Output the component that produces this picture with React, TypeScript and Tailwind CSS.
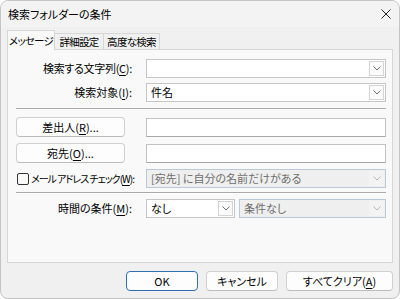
import React from 'react';

const font = "[font-family:'Noto_Sans_CJK_JP','Noto_Sans',sans-serif] [font-feature-settings:'palt']";

const Chevron = ({ color }: { color: string }) => (
  <svg width="8" height="5" viewBox="0 0 8 5" fill="none">
    <path d="M0.5 0.5 L4 4 L7.5 0.5" stroke={color} strokeWidth="1" />
  </svg>
);

const Combo = ({ value, disabled, className }: { value?: string; disabled?: boolean; className?: string }) => (
  <div
    className={`flex h-[19px] items-center border ${
      disabled ? 'border-[#b9c9da] bg-[#efefef] text-[#6e6e6e]' : 'border-[#c6c6c6] bg-white text-black'
    } ${className ?? ''}`}
  >
    <span className="min-w-0 flex-1 whitespace-nowrap pl-[4px] leading-[17px]">{value}</span>
    <span
      className={`mr-px flex h-[15px] w-[15px] shrink-0 items-center justify-center border ${
        disabled ? 'border-transparent bg-[#f3f3f3]' : 'border-[#d4d4d4] bg-[#fbfbfb]'
      }`}
    >
      <Chevron color={disabled ? '#b8b8b8' : '#707070'} />
    </span>
  </div>
);

const TextBox = () => <div className="h-[19px] border border-[#c2c2c2] border-b-[#a8a8a8] bg-white" />;

const Button = ({ children, primary, className }: { children: React.ReactNode; primary?: boolean; className?: string }) => (
  <div
    className={`flex h-[20px] items-center justify-center whitespace-nowrap rounded-[4px] border bg-[#fdfdfd] text-black leading-none ${
      primary ? 'border-[#2f6fb0]' : 'border-[#d0d0d0] border-b-[#bcbcbc]'
    } ${className ?? ''}`}
  >
    {children}
  </div>
);

const Separator = ({ className }: { className?: string }) => (
  <div className={`border-t border-[#a9a9a9] border-b border-b-white ${className ?? ''}`} />
);

const U = ({ c }: { c: string }) => <span className="underline underline-offset-2">{c}</span>;

export default function App() {
  return (
    <div className={`h-[299px] w-[400px] bg-white text-[11px] text-black ${font}`}>
      <div className="flex h-[299px] w-[400px] flex-col overflow-hidden rounded-[8px] border border-[#c4c4c4] bg-[#f0f0f0]">
        {/* Title bar */}
        <div className="flex h-[26px] shrink-0 items-center justify-between bg-[#f3f3f3] pl-[7px] pr-[8px]">
          <span className="text-[11px] leading-none">検索フォルダーの条件</span>
          <svg width="10" height="10" viewBox="0 0 10 10">
            <path d="M0.5 0.5 L9.5 9.5 M9.5 0.5 L0.5 9.5" stroke="#222" strokeWidth="1" />
          </svg>
        </div>

        {/* Tabs */}
        <div className="flex h-[22px] shrink-0 items-end whitespace-nowrap px-[6px] text-[10.5px] tracking-[-0.7px]">
          <div className="relative z-10 -mb-px flex h-[20px] w-[48px] items-center justify-center border border-b-0 border-[#d6d6d6] bg-[#f9f9f9]">
            メッセージ
          </div>
          <div className="flex h-[16px] w-[49px] items-center justify-center border border-l-0 border-b-0 border-[#d6d6d6] bg-[#f0f0f0]">
            詳細設定
          </div>
          <div className="flex h-[16px] w-[56px] items-center justify-center border border-l-0 border-b-0 border-[#d6d6d6] bg-[#f0f0f0]">
            高度な検索
          </div>
        </div>

        {/* Panel */}
        <div className="mx-[6px] flex h-[214px] shrink-0 flex-col border border-[#d6d6d6] bg-[#f9f9f9] pl-[8px] pr-[6px] pt-[9px]">
          <div className="grid grid-cols-[116px_1fr] items-center gap-x-[14px]">
            <span className="whitespace-nowrap text-right tracking-[-0.3px]">
              検索する文字列(<U c="C" />):
            </span>
            <Combo />
          </div>
          <div className="mt-[5px] grid grid-cols-[116px_1fr] items-center gap-x-[14px]">
            <span className="whitespace-nowrap text-right">
              検索対象(<U c="I" />):
            </span>
            <Combo value="件名" />
          </div>

          <Separator className="mt-[6px]" />

          <div className="mt-[7px] grid grid-cols-[116px_1fr] items-center gap-x-[14px]">
            <Button className="w-[109px]">
              差出人(<U c="R" />)...
            </Button>
            <TextBox />
          </div>
          <div className="mt-[6px] grid grid-cols-[116px_1fr] items-center gap-x-[14px]">
            <Button className="w-[109px]">
              宛先(<U c="O" />)...
            </Button>
            <TextBox />
          </div>
          <div className="mt-[6px] grid grid-cols-[116px_1fr] items-center gap-x-[14px]">
            <label className="flex items-center whitespace-nowrap pl-px">
              <span className="mr-[2px] h-[12px] w-[12px] shrink-0 rounded-[2px] border border-[#333] bg-[#f9f9f9]" />
              <span className="text-[10px] tracking-[-1px]">
                メール アドレス チェック(<U c="W" />):
              </span>
            </label>
            <Combo value="[宛先] に自分の名前だけがある" disabled />
          </div>

          <Separator className="mt-[4px]" />

          <div className="mt-[5px] grid grid-cols-[116px_1fr] items-center gap-x-[14px]">
            <span className="whitespace-nowrap text-right">
              時間の条件(<U c="M" />):
            </span>
            <div className="flex gap-[4px]">
              <Combo value="なし" className="w-[89px]" />
              <Combo value="条件なし" disabled className="flex-1" />
            </div>
          </div>
        </div>

        {/* Footer buttons */}
        <div className="mt-[8px] flex justify-end gap-[8px] pr-[6px]">
          <Button primary className="w-[72px]">
            OK
          </Button>
          <Button className="w-[72px]">キャンセル</Button>
          <Button className="w-[107px]">
            すべてクリア(<U c="A" />)
          </Button>
        </div>
      </div>
    </div>
  );
}
